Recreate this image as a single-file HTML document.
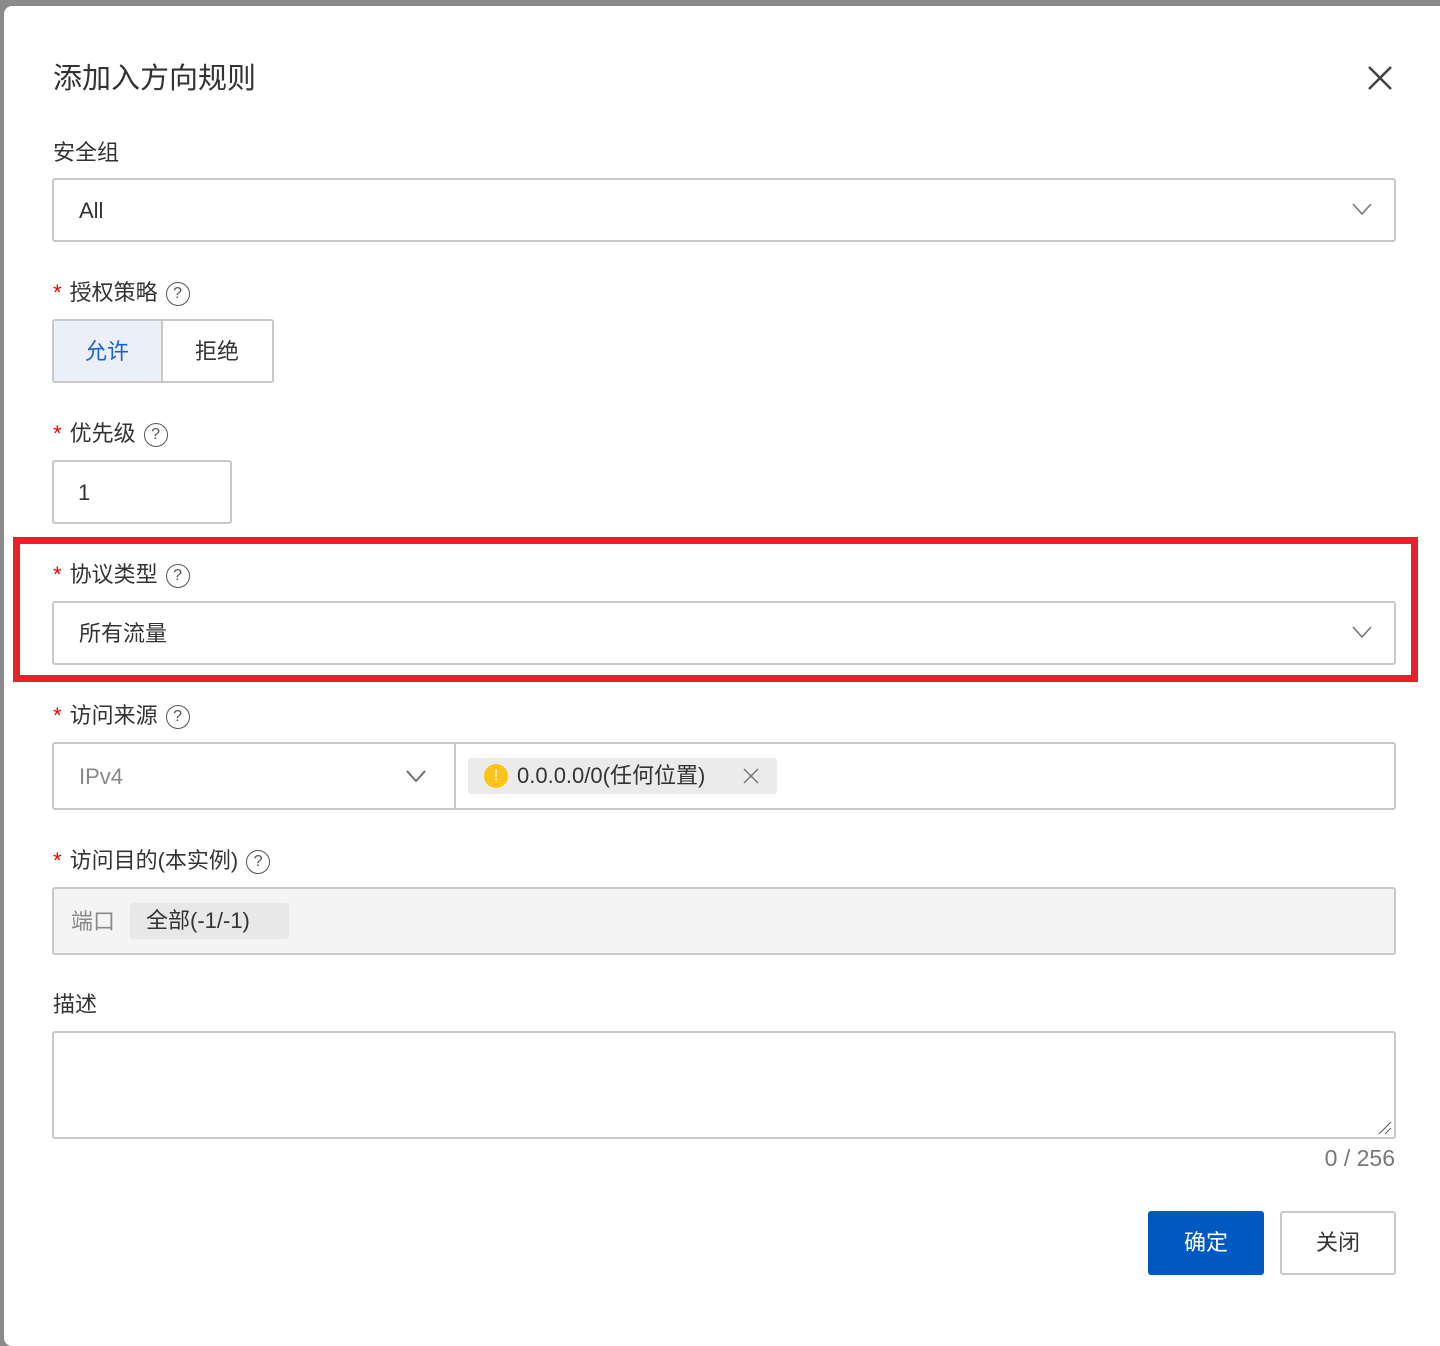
<!DOCTYPE html>
<html><head><meta charset="utf-8"><style>
*{box-sizing:border-box;margin:0;padding:0}
body{width:1440px;height:1322px;background:#8a8a8a;position:relative;overflow:hidden;font-family:"Liberation Sans","Noto Sans CJK SC",sans-serif;color:#333}
.dlg{position:absolute;left:4px;top:6px;width:1460px;height:1340px;background:#fff;border-radius:8px}
.a{position:absolute}
.title{left:53px;top:60px;font-size:29px;line-height:38px;color:#333}
.lbl{font-size:22px;line-height:30px;color:#333;left:53px}
.star{color:#e00;margin-right:8px}
.q{display:inline-block;width:24px;height:24px;border:1.6px solid #555;border-radius:50%;font-size:16px;line-height:21px;text-align:center;vertical-align:2px;margin-left:8px;color:#555}
.box{border:2px solid #c8c8c8;border-radius:3px;background:#fff}
.txt{font-size:22px;line-height:30px;color:#333}
.chev{position:absolute;width:20px;height:12px}
</style></head><body>
<div class="dlg"></div>
<div class="a title">添加入方向规则</div>
<svg class="a" style="left:1366px;top:64px" width="28" height="28" viewBox="0 0 28 28"><path d="M3 3L25 25M25 3L3 25" stroke="#444" stroke-width="2.6"/></svg>

<div class="a lbl" style="top:138px">安全组</div>
<div class="a box" style="left:52px;top:178px;width:1344px;height:64px"></div>
<div class="a txt" style="left:79px;top:196px">All</div>
<svg class="chev" style="left:1352px;top:203px" viewBox="0 0 20 12"><path d="M1 1L10 11L19 1" fill="none" stroke="#777" stroke-width="1.6"/></svg>

<div class="a lbl" style="top:278px"><span class="star">*</span>授权策略<span class="q">?</span></div>
<div class="a box" style="left:52px;top:319px;width:222px;height:64px"></div>
<div class="a" style="left:54px;top:321px;width:109px;height:60px;background:#ebeff8;border-right:2px solid #c8c8c8"></div>
<div class="a txt" style="left:85px;top:337px;color:#1a64c6">允许</div>
<div class="a txt" style="left:195px;top:337px">拒绝</div>

<div class="a lbl" style="top:419px"><span class="star">*</span>优先级<span class="q">?</span></div>
<div class="a box" style="left:52px;top:460px;width:180px;height:64px"></div>
<div class="a txt" style="left:78px;top:478px">1</div>

<div class="a" style="left:13px;top:537px;width:1405px;height:145px;border:7px solid #e8202b"></div>
<div class="a lbl" style="top:560px"><span class="star">*</span>协议类型<span class="q">?</span></div>
<div class="a box" style="left:52px;top:601px;width:1344px;height:64px"></div>
<div class="a txt" style="left:79px;top:619px">所有流量</div>
<svg class="chev" style="left:1352px;top:626px" viewBox="0 0 20 12"><path d="M1 1L10 11L19 1" fill="none" stroke="#777" stroke-width="1.6"/></svg>

<div class="a lbl" style="top:701px"><span class="star">*</span>访问来源<span class="q">?</span></div>
<div class="a box" style="left:52px;top:742px;width:1344px;height:68px"></div>
<div class="a" style="left:454px;top:744px;width:2px;height:64px;background:#c8c8c8"></div>
<div class="a txt" style="left:79px;top:762px;color:#888">IPv4</div>
<svg class="chev" style="left:406px;top:770px" viewBox="0 0 20 12"><path d="M1 1L10 11L19 1" fill="none" stroke="#666" stroke-width="1.8"/></svg>
<div class="a" style="left:468px;top:758px;width:309px;height:36px;background:#ebebeb;border-radius:3px"></div>
<div class="a" style="left:484px;top:764px;width:24px;height:24px;border-radius:50%;background:#fcc419;color:#fff;font-size:16px;line-height:24px;text-align:center">!</div>
<div class="a txt" style="left:517px;top:761px">0.0.0.0/0(任何位置)</div>
<svg class="a" style="left:743px;top:768px" width="16" height="16" viewBox="0 0 16 16"><path d="M1 1L15 15M15 1L1 15" stroke="#777" stroke-width="1.5"/></svg>

<div class="a lbl" style="top:846px"><span class="star">*</span>访问目的(本实例)<span class="q">?</span></div>
<div class="a box" style="left:52px;top:887px;width:1344px;height:68px;background:#f4f4f4"></div>
<div class="a txt" style="left:71px;top:907px;color:#888">端口</div>
<div class="a" style="left:130px;top:903px;width:159px;height:36px;background:#e8e8e8;border-radius:3px"></div>
<div class="a txt" style="left:146px;top:906px">全部(-1/-1)</div>

<div class="a lbl" style="top:990px">描述</div>
<div class="a box" style="left:52px;top:1031px;width:1344px;height:108px"></div>
<svg class="a" style="left:1378px;top:1121px" width="14" height="14" viewBox="0 0 14 14"><path d="M1 13L13 1M7 13L13 7" stroke="#666" stroke-width="1.2"/></svg>
<div class="a" style="left:1200px;top:1143px;width:195px;text-align:right;font-size:23px;line-height:30px;color:#777">0 / 256</div>

<div class="a" style="left:1148px;top:1211px;width:116px;height:64px;background:#0059c1;border-radius:3px;color:#fff;font-size:22px;line-height:64px;text-align:center">确定</div>
<div class="a box" style="left:1280px;top:1211px;width:116px;height:64px;font-size:22px;line-height:60px;text-align:center">关闭</div>
</body></html>
